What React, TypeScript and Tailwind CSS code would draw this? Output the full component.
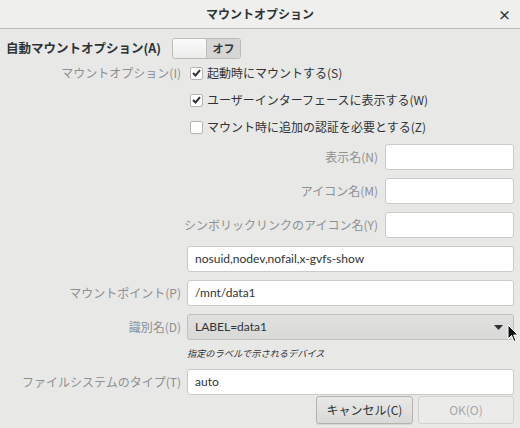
import React from 'react';

const FONT = { fontFamily: '"Noto Sans CJK JP", "Noto Sans", sans-serif' };
const LATIN = { fontFamily: 'Lato, "Noto Sans CJK JP", sans-serif' };

function Check({ checked, label }: { checked: boolean; label: string }) {
  return (
    <div className="flex h-[20px] items-center">
      <span className="flex h-[13px] w-[13px] items-center justify-center rounded-[2px] border border-[#b8b4b0] bg-white">
        {checked ? (
          <svg width="9" height="8" viewBox="0 0 9 8">
            <path d="M1 4 L3.5 6.5 L8 1.2" fill="none" stroke="#2e3436" strokeWidth="2" />
          </svg>
        ) : null}
      </span>
      <span className="ml-[4px] text-[#2e3436]">{label}</span>
    </div>
  );
}

function Field({ value = '' }: { value?: string }) {
  return (
    <div
      className="flex h-[26px] flex-1 items-center rounded-[3px] border border-[#cdc9c5] bg-white px-[7px] text-[#2e3436]"
      style={LATIN}
    >
      {value}
    </div>
  );
}

function Label({ children }: { children: React.ReactNode }) {
  return <span className="text-right text-[#8d9091]">{children}</span>;
}

export default function App() {
  return (
    <div className="relative h-[428px] w-[520px] overflow-hidden bg-[#e8e8e7] text-[12px]" style={FONT}>
      <div className="relative flex h-[29px] items-center justify-center border-b border-[#bdbdba] bg-[#efefee]">
        <span className="font-bold text-[#2e3436]">マウントオプション</span>
        <span className="absolute right-[9px] top-[5px] text-[13px] font-bold text-[#2e3436]">×</span>
      </div>

      <div className="flex flex-col px-[6px]">
        <div className="mt-[9px] flex h-[21px] items-center">
          <span className="w-[166px] text-[12.5px] font-bold text-[#2e3436]">自動マウントオプション(A)</span>
          <div className="flex h-[21px] w-[69px] overflow-hidden rounded-[3px] border border-[#bfbbb7]">
            <span className="w-[34px] border-r border-[#bfbbb7] bg-gradient-to-b from-[#fbfbfb] to-[#ececeb]" />
            <span className="flex flex-1 items-center justify-center bg-[#d6d6d5] text-[11px] font-bold text-[#2e3436]">
              オフ
            </span>
          </div>
        </div>

        <div className="mt-[4px] grid grid-cols-[175px_1fr] gap-x-[9px]">
          <div className="flex h-[20px] items-center justify-end">
            <Label>マウントオプション(I)</Label>
          </div>
          <div className="flex flex-col gap-[7px]">
            <Check checked label="起動時にマウントする(S)" />
            <Check checked label="ユーザーインターフェースに表示する(W)" />
            <Check checked={false} label="マウント時に追加の認証を必要とする(Z)" />
          </div>
        </div>

        <div className="mt-[7px] flex flex-col gap-[8px]">
          {['表示名(N)', 'アイコン名(M)', 'シンボリックリンクのアイコン名(Y)'].map((l) => (
            <div key={l} className="flex items-center justify-end gap-[7px]">
              <Label>{l}</Label>
              <div className="flex w-[129px]">
                <Field />
              </div>
            </div>
          ))}
        </div>

        <div className="mt-[8px] grid grid-cols-[175px_1fr] items-center gap-x-[6px]">
          <span />
          <Field value="nosuid,nodev,nofail,x-gvfs-show" />

          <div className="mt-[8px] flex justify-end">
            <Label>マウントポイント(P)</Label>
          </div>
          <div className="mt-[8px] flex">
            <Field value="/mnt/data1" />
          </div>

          <div className="mt-[8px] flex justify-end">
            <Label>識別名(D)</Label>
          </div>
          <div
            className="mt-[8px] flex h-[26px] items-center justify-between rounded-[3px] border border-[#c3bfbb] bg-gradient-to-b from-[#e0e0df] to-[#d9d9d8] px-[7px] text-[#2e3436]"
            style={LATIN}
          >
            <span>LABEL=data1</span>
            <svg width="9" height="5" viewBox="0 0 9 5" className="mr-[3px]">
              <path d="M0 0 L9 0 L4.5 5 Z" fill="#2e3436" />
            </svg>
          </div>

          <span />
          <div className="mt-[4px] flex h-[20px] items-center text-[9.2px] italic text-[#2e3436]">
            指定のラベルで示されるデバイス
          </div>

          <div className="mt-[5px] flex justify-end">
            <Label>ファイルシステムのタイプ(T)</Label>
          </div>
          <div className="mt-[5px] flex">
            <Field value="auto" />
          </div>
        </div>

        <div className="mt-[1px] flex justify-end gap-[5px]">
          <button className="h-[28px] w-[97px] rounded-[3px] border border-[#b6b2ae] bg-gradient-to-b from-[#e8e8e7] to-[#d9d9d8] text-[#2e3436] shadow-[0_1px_0_rgba(0,0,0,0.08)]">
            キャンセル(C)
          </button>
          <button className="h-[28px] w-[96px] rounded-[3px] border border-[#d3d0cd] bg-[#ebebea] text-[#a5a8a8]">
            OK(O)
          </button>
        </div>
      </div>

      <svg className="absolute left-[507px] top-[324px]" width="12" height="19" viewBox="0 0 12 19">
        <path d="M1 1 L1 15 L4.5 11.5 L7 17.5 L9 16.6 L6.6 11 L11 11 Z" fill="#111" stroke="#fff" strokeWidth="1" />
      </svg>
    </div>
  );
}
